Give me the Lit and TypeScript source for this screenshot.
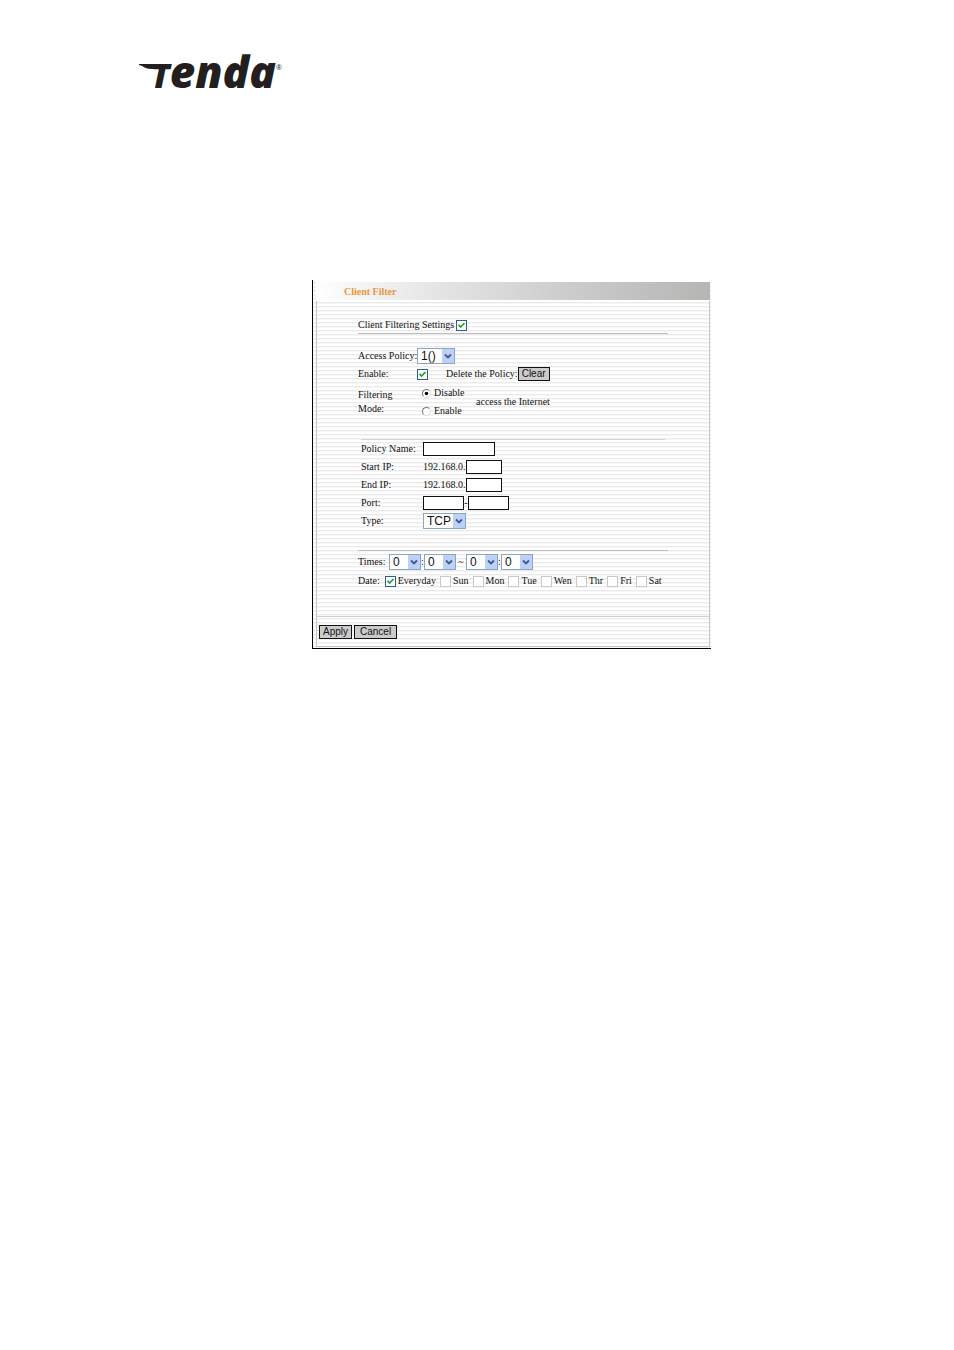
import { LitElement, html, css } from "lit";
import { customElement } from "lit/decorators.js";

const DAYS = ["Everyday", "Sun", "Mon", "Tue", "Wen", "Thr", "Fri", "Sat"];
const TIME_FIELDS = [
  { label: "Start hour", after: ":" },
  { label: "Start minute", after: "~" },
  { label: "End hour", after: ":" },
  { label: "End minute", after: "" },
];

@customElement("app-root")
export class AppRoot extends LitElement {
  static styles = css`
    :host {
      display: block;
      min-height: 100vh;
      background: #fff;
      color: #111;
      font-family: "Liberation Serif", "Times New Roman", serif;
      font-size: 10px;
      line-height: 14px;
    }
    * {
      box-sizing: border-box;
    }
    .page {
      padding: 51px 70px 40px 139px;
    }
    .brand {
      display: flex;
      align-items: flex-start;
      height: 40px;
      color: #231f20;
      font-family: "Open Sans", sans-serif;
    }
    .swoosh {
      width: 28px;
      height: 20px;
      margin-right: -16px;
      fill: currentColor;
    }
    .word {
      font-size: 44px;
      line-height: 40px;
      font-weight: 800;
      font-style: italic;
    }
    .initial {
      font-size: 34px;
    }
    .mark {
      padding-top: 10px;
      font-size: 7px;
      line-height: 14px;
    }
    .panel {
      max-width: 399px;
      margin: 189px auto 0;
      padding: 1px 1px 1px 3px;
      border-left: 1px solid #000;
      border-bottom: 1px solid #000;
      background: repeating-linear-gradient(#fff 0 2px, #ebebeb 2px 3px, #f6f6f6 3px 4px);
    }
    .title {
      margin: 0;
      padding: 2px 28px 1px;
      border-top: 1px solid #fff;
      border-bottom: 1px solid #fff;
      background: linear-gradient(90deg, #fff, #e9e9e9 25%, #cfcfcf 60%, #b5b5b4);
      color: #e8973a;
      font-size: 10px;
      line-height: 15px;
      font-weight: 700;
    }
    .frame {
      border: 1px solid #c4c4c4;
      border-top: 0;
    }
    .content {
      padding: 16px 41px 26px;
    }
    .row {
      display: flex;
      align-items: center;
      height: 18px;
    }
    .line {
      border-bottom: 1px solid #bdbdbd;
    }
    .switch {
      gap: 2px;
      height: 17px;
    }
    .policy {
      padding: 13px 0 18px;
    }
    .lead {
      width: 59px;
      white-space: nowrap;
    }
    .delete {
      margin-left: 18px;
      white-space: nowrap;
    }
    .mode {
      display: flex;
      align-items: center;
      height: 38px;
      margin: 0;
      padding: 0;
      border: 0;
    }
    .choices {
      display: flex;
      flex-direction: column;
      width: 59px;
      padding-left: 5px;
    }
    .choice {
      display: flex;
      align-items: center;
      gap: 3px;
      height: 18px;
    }
    .range {
      margin: 0 3px;
      padding: 0 0 20px;
      border-top: 1px solid #d4d4d4;
    }
    .name {
      width: 62px;
      white-space: nowrap;
    }
    .schedule {
      padding-top: 1px;
      border-top: 1px solid #bdbdbd;
    }
    .times {
      height: 20px;
    }
    .first {
      width: 31px;
    }
    .sep {
      width: 3px;
      text-align: center;
    }
    .dash {
      width: 4px;
    }
    .wide {
      width: 10px;
    }
    .days {
      gap: 4px;
    }
    .caption {
      margin-right: 1px;
    }
    .day {
      display: flex;
      align-items: center;
      gap: 2px;
    }
    .actions {
      display: flex;
      gap: 2px;
      padding: 8px 2px 7px;
      border-top: 1px solid #d0d0d0;
    }
    input,
    select,
    button {
      margin: 0;
      border-radius: 0;
      font-family: "Liberation Sans", Arial, sans-serif;
      color: #111;
    }
    .text {
      height: 14px;
      padding: 0 2px;
      border: 1px solid #111;
      background: #fff;
      font-size: 10px;
    }
    .long {
      width: 72px;
    }
    .octet {
      width: 36px;
    }
    .port {
      width: 41px;
    }
    .check {
      appearance: none;
      flex: none;
      width: 11px;
      height: 11px;
      border: 1px solid #c9c9c9;
      background: #fff;
    }
    .check:checked {
      border-color: #2f5f86;
      background: #fff
        url("data:image/svg+xml,%3Csvg xmlns='http://www.w3.org/2000/svg' viewBox='0 0 9 9'%3E%3Cpath d='M1.5 3.8 3.6 6 7.5 2' fill='none' stroke='%2321a121' stroke-width='1.7'/%3E%3C/svg%3E");
    }
    .radio {
      appearance: none;
      width: 9px;
      height: 9px;
      border: 1px solid;
      border-color: #777 #ddd #ddd #777;
      border-radius: 50%;
      background: #fff;
    }
    .radio:checked {
      background: #fff
        url("data:image/svg+xml,%3Csvg xmlns='http://www.w3.org/2000/svg' viewBox='0 0 7 7'%3E%3Ccircle cx='3.5' cy='3.5' r='1.8'/%3E%3C/svg%3E");
    }
    .pick {
      appearance: none;
      height: 16px;
      padding: 0 13px 0 3px;
      border: 1px solid #8ba6bf;
      background: #fff
        url("data:image/svg+xml,%3Csvg xmlns='http://www.w3.org/2000/svg' width='12' height='14'%3E%3Crect width='12' height='14' fill='%23bdd0f8'/%3E%3Cpath d='M3 5.5 6 8.5 9 5.5' fill='none' stroke='%233f5a91' stroke-width='1.8'/%3E%3C/svg%3E")
        right center no-repeat;
      font-size: 12px;
      line-height: 14px;
    }
    .small {
      width: 32px;
    }
    .medium {
      width: 38px;
    }
    .large {
      width: 43px;
    }
    .button {
      height: 14px;
      padding: 0 3px;
      border: 1px solid #111;
      background: #cbcbcb;
      font-size: 10px;
      line-height: 12px;
    }
    .roomy {
      padding: 0 5px;
    }
  `;

  render() {
    return html`
      <div class="page">
        <header class="brand">
          <svg class="swoosh" viewBox="0 0 28 20" aria-hidden="true">
            <path d="M0 13H28L26 18H12C6 18 5 15 0 14Z" />
          </svg>
          <span class="word"><span class="initial">T</span>enda</span><span class="mark">®</span>
        </header>
        <form class="panel" @submit=${(e: Event) => e.preventDefault()}>
          <h1 class="title">Client Filter</h1>
          <div class="frame">
            <div class="content">
              <div class="row switch line">
                <label for="filtering">Client Filtering Settings</label>
                <input class="check" id="filtering" type="checkbox" checked />
              </div>
              <div class="policy">
                <div class="row">
                  <label class="lead" for="policy">Access Policy:</label>
                  <select class="pick medium" id="policy"><option>1()</option></select>
                </div>
                <div class="row">
                  <label class="lead" for="enable">Enable:</label>
                  <input class="check" id="enable" type="checkbox" checked />
                  <span class="delete" id="delete">Delete the Policy:</span>
                  <button class="button" type="button" aria-describedby="delete">Clear</button>
                </div>
                <fieldset class="mode" aria-label="Filtering Mode">
                  <span class="lead">Filtering<br />Mode:</span>
                  <span class="choices">
                    <label class="choice"><input class="radio" type="radio" name="mode" checked />Disable</label>
                    <label class="choice"><input class="radio" type="radio" name="mode" />Enable</label>
                  </span>
                  <span>access the Internet</span>
                </fieldset>
              </div>
              <div class="range">
                <div class="row">
                  <label class="name" for="pname">Policy Name:</label>
                  <input class="text long" id="pname" type="text" />
                </div>
                <div class="row">
                  <label class="name" for="start">Start IP:</label>
                  <span>192.168.0.</span><input class="text octet" id="start" type="text" />
                </div>
                <div class="row">
                  <label class="name" for="end">End IP:</label>
                  <span>192.168.0.</span><input class="text octet" id="end" type="text" />
                </div>
                <div class="row">
                  <label class="name" for="port">Port:</label>
                  <input class="text port" id="port" type="text" /><span class="sep dash">-</span
                  ><input class="text port" type="text" aria-label="Last port" />
                </div>
                <div class="row">
                  <label class="name" for="type">Type:</label>
                  <select class="pick large" id="type"><option>TCP</option></select>
                </div>
              </div>
              <div class="schedule">
                <div class="row times">
                  <span class="first">Times:</span>
                  ${TIME_FIELDS.map(
                    (f) => html`<select class="pick small" aria-label=${f.label}><option>0</option></select
                      ><span class="sep ${f.after === "~" ? "wide" : ""}">${f.after}</span>`
                  )}
                </div>
                <div class="row days">
                  <span class="caption">Date:</span>
                  ${DAYS.map(
                    (d, i) => html`<label class="day"
                      ><input class="check" type="checkbox" ?checked=${i === 0} />${d}</label
                    >`
                  )}
                </div>
              </div>
            </div>
            <div class="actions">
              <button class="button" type="submit">Apply</button>
              <button class="button roomy" type="reset">Cancel</button>
            </div>
          </div>
        </form>
      </div>
    `;
  }
}
